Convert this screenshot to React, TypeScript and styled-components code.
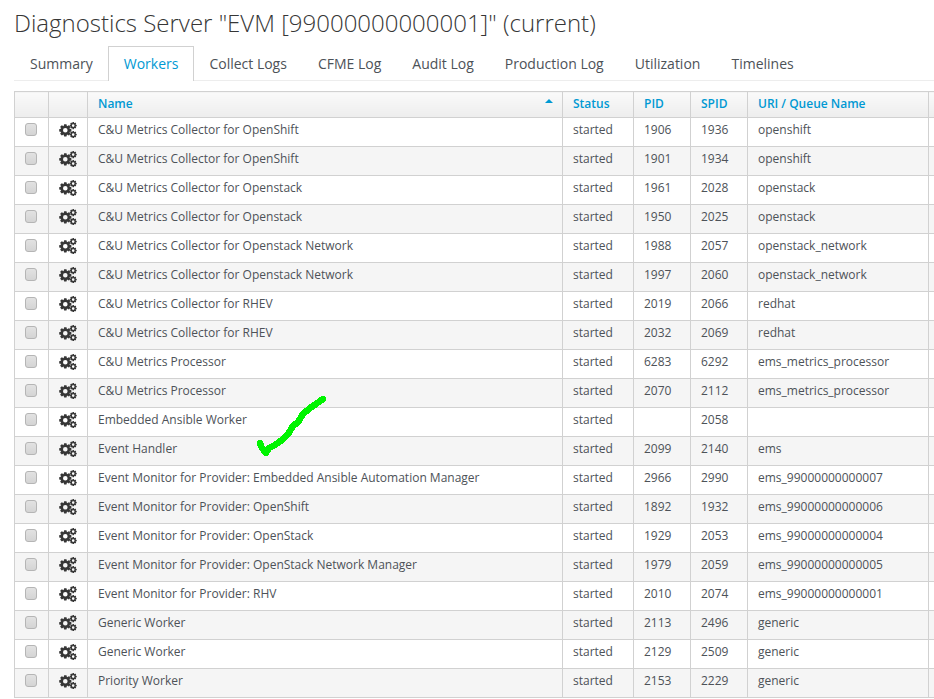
import styled, { createGlobalStyle } from "styled-components";

const GlobalStyle = createGlobalStyle`
  html, body {
    margin: 0;
    padding: 0;
    height: 699px;
    overflow: hidden;
    background: #fff;
    font-family: "Open Sans", "Liberation Sans", sans-serif;
    color: #363636;
  }
`;

const Page = styled.div`
  position: relative;
  width: 934px;
  height: 699px;
  overflow: hidden;
  padding: 0 0 0 14px;
  box-sizing: border-box;
`;

const Title = styled.h1`
  margin: 0;
  padding-top: 6px;
  height: 46px;
  box-sizing: border-box;
  font-size: 24px;
  font-weight: 300;
  line-height: 33px;
  color: #363636;
  white-space: nowrap;
`;

const Tabs = styled.ul`
  display: flex;
  list-style: none;
  margin: 0 0 10px;
  padding: 0;
  height: 35px;
  box-sizing: border-box;
  width: 920px;
  border-bottom: 1px solid #ededed;
`;

const Tab = styled.li<{ $active?: boolean }>`
  height: 35px;
  box-sizing: border-box;
  margin-right: -1px;
  padding: 7px 15px 0;
  font-size: 14px;
  line-height: 19px;
  color: ${(p) => (p.$active ? "#0099d3" : "#4d5258")};
  background: ${(p) => (p.$active ? "#fff" : "transparent")};
  border: 1px solid ${(p) => (p.$active ? "#d1d1d1" : "transparent")};
  border-bottom: 0;
`;

const Table = styled.table`
  border-collapse: collapse;
  table-layout: fixed;
  width: 940px;
  font-size: 12px;
  line-height: 17px;
`;

const Head = styled.th`
  height: 26px;
  box-sizing: border-box;
  padding: 0 10px 2px;
  text-align: left;
  font-weight: 600;
  color: #0099d3;
  background: linear-gradient(to bottom, #fafafa 0%, #ededed 100%);
  border: 1px solid #d1d1d1;
  position: relative;
  white-space: nowrap;
`;

const SortCaret = styled.span`
  position: absolute;
  right: 9px;
  top: 7px;
  width: 0;
  height: 0;
  border-left: 4px solid transparent;
  border-right: 4px solid transparent;
  border-bottom: 4px solid #0099d3;
`;

const Row = styled.tr`
  background: #fff;
  &:nth-child(even) {
    background: #f5f5f5;
  }
`;

const Cell = styled.td`
  height: 29px;
  box-sizing: border-box;
  padding: 3px 10px 0;
  vertical-align: top;
  border: 1px solid #d1d1d1;
  white-space: nowrap;
  color: #4d5258;
`;

const IconCell = styled(Cell)`
  padding: 5px 0 0;
  text-align: center;
`;

const Check = styled.input.attrs({ type: "checkbox" })`
  appearance: none;
  display: block;
  width: 12px;
  height: 13px;
  margin: 0 auto;
  position: relative;
  left: -1px;
  box-sizing: border-box;
  background: linear-gradient(to bottom, #e2e2e2, #d4d4d4);
  border: 1px solid #b5b5b5;
  border-radius: 3px;
`;

const GearIcon = styled.svg`
  display: block;
  margin: -1px auto 0;
  color: #363636;
`;

const Tick = styled.svg`
  position: absolute;
  left: 250px;
  top: 390px;
  pointer-events: none;
`;

// one gear: teeth around the rim and a round hole, drawn with the evenodd rule
function gearPath(cx: number, cy: number, r: number, hole: number, teeth: number) {
  const inner = r * 0.72;
  const step = (Math.PI * 2) / teeth;
  let d = "";
  for (let i = 0; i < teeth; i++) {
    const a = i * step;
    const pts: [number, number][] = [
      [inner, a - step * 0.5],
      [r, a - step * 0.24],
      [r, a + step * 0.24],
      [inner, a + step * 0.5],
    ];
    pts.forEach(([rad, ang], j) => {
      const x = (cx + rad * Math.cos(ang)).toFixed(2);
      const y = (cy + rad * Math.sin(ang)).toFixed(2);
      d += `${i === 0 && j === 0 ? "M" : "L"}${x} ${y}`;
    });
  }
  d += "Z";
  d += `M${cx - hole} ${cy}a${hole} ${hole} 0 1 0 ${hole * 2} 0a${hole} ${hole} 0 1 0 ${-hole * 2} 0Z`;
  return d;
}

function Gears() {
  return (
    <GearIcon width="18" height="16" viewBox="0 0 18 16" fill="currentColor">
      <path fillRule="evenodd" d={gearPath(6.3, 8.3, 6.2, 2.3, 8)} />
      <path fillRule="evenodd" d={gearPath(14.2, 3.6, 3.6, 1.3, 8)} />
      <path fillRule="evenodd" d={gearPath(14.2, 12.6, 3.6, 1.3, 8)} />
    </GearIcon>
  );
}

const tabs = ["Summary", "Workers", "Collect Logs", "CFME Log", "Audit Log", "Production Log", "Utilization", "Timelines"];

const workers: [string, string, string, string][] = [
  ["C&U Metrics Collector for OpenShift", "1906", "1936", "openshift"],
  ["C&U Metrics Collector for OpenShift", "1901", "1934", "openshift"],
  ["C&U Metrics Collector for Openstack", "1961", "2028", "openstack"],
  ["C&U Metrics Collector for Openstack", "1950", "2025", "openstack"],
  ["C&U Metrics Collector for Openstack Network", "1988", "2057", "openstack_network"],
  ["C&U Metrics Collector for Openstack Network", "1997", "2060", "openstack_network"],
  ["C&U Metrics Collector for RHEV", "2019", "2066", "redhat"],
  ["C&U Metrics Collector for RHEV", "2032", "2069", "redhat"],
  ["C&U Metrics Processor", "6283", "6292", "ems_metrics_processor"],
  ["C&U Metrics Processor", "2070", "2112", "ems_metrics_processor"],
  ["Embedded Ansible Worker", "", "2058", ""],
  ["Event Handler", "2099", "2140", "ems"],
  ["Event Monitor for Provider: Embedded Ansible Automation Manager", "2966", "2990", "ems_99000000000007"],
  ["Event Monitor for Provider: OpenShift", "1892", "1932", "ems_99000000000006"],
  ["Event Monitor for Provider: OpenStack", "1929", "2053", "ems_99000000000004"],
  ["Event Monitor for Provider: OpenStack Network Manager", "1979", "2059", "ems_99000000000005"],
  ["Event Monitor for Provider: RHV", "2010", "2074", "ems_99000000000001"],
  ["Generic Worker", "2113", "2496", "generic"],
  ["Generic Worker", "2129", "2509", "generic"],
  ["Priority Worker", "2153", "2229", "generic"],
];

function App() {
  return (
    <Page>
      <GlobalStyle />
      <Title>Diagnostics Server "EVM [99000000000001]" (current)</Title>
      <Tabs>
        {tabs.map((t) => (
          <Tab key={t} $active={t === "Workers"}>
            {t}
          </Tab>
        ))}
      </Tabs>
      <Table>
        <colgroup>
          <col width={34} />
          <col width={39} />
          <col width={475} />
          <col width={71} />
          <col width={57} />
          <col width={57} />
          <col width={181} />
          <col width={26} />
        </colgroup>
        <thead>
          <tr>
            <Head />
            <Head />
            <Head>
              Name
              <SortCaret />
            </Head>
            <Head>Status</Head>
            <Head>PID</Head>
            <Head>SPID</Head>
            <Head>URI / Queue Name</Head>
            <Head />
          </tr>
        </thead>
        <tbody>
          {workers.map(([name, pid, spid, uri], i) => (
            <Row key={i}>
              <IconCell>
                <Check />
              </IconCell>
              <IconCell>
                <Gears />
              </IconCell>
              <Cell>{name}</Cell>
              <Cell>started</Cell>
              <Cell>{pid}</Cell>
              <Cell>{spid}</Cell>
              <Cell>{uri}</Cell>
              <Cell />
            </Row>
          ))}
        </tbody>
      </Table>
      <Tick width="80" height="70" viewBox="0 0 80 70" shapeRendering="crispEdges">
        <path
          d="M10 53 L12 58 L16 63 L19 58 L25 55 L32 50 L38 44 L43 36 L48 32 L53 24 L60 18 L66 14 L73 9"
          fill="none"
          stroke="#00f400"
          strokeWidth="6.5"
          strokeLinecap="round"
          strokeLinejoin="round"
        />
      </Tick>
    </Page>
  );
}

export default App;
